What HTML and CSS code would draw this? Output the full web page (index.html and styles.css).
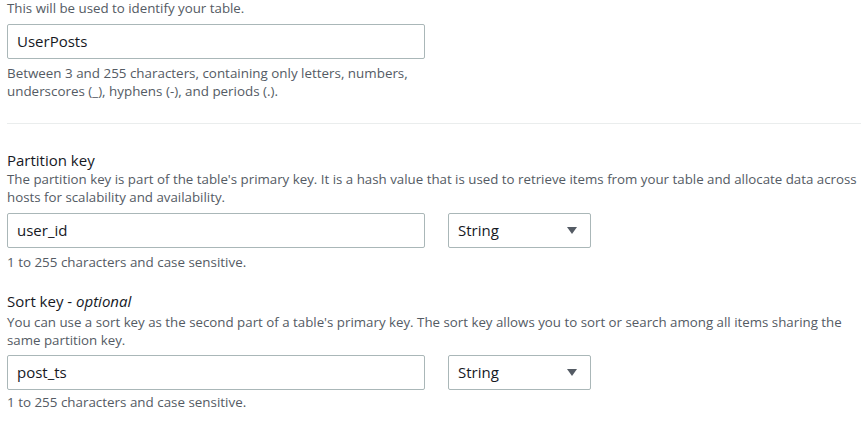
FILE: index.html
```html
<!DOCTYPE html>
<html>
<head>
<meta charset="utf-8">
<link rel="stylesheet" href="styles.css">
</head>
<body>
<div class="page">
  <section class="field first">
    <p class="desc">This will be used to identify your table.</p>
    <div class="input wide">UserPosts</div>
    <p class="hint">Between 3 and 255 characters, containing only letters, numbers,<br>underscores (_), hyphens (-), and periods (.).</p>
  </section>
  <hr class="divider">
  <section class="field second">
    <h3 class="label">Partition key</h3>
    <p class="desc">The partition key is part of the table's primary key. It is a hash value that is used to retrieve items from your table and allocate data across hosts for scalability and availability.</p>
    <div class="row">
      <div class="input wide">user_id</div>
      <div class="select">String<span class="caret"></span></div>
    </div>
    <p class="hint">1 to 255 characters and case sensitive.</p>
  </section>
  <section class="field third">
    <h3 class="label">Sort key - <em>optional</em></h3>
    <p class="desc">You can use a sort key as the second part of a table's primary key. The sort key allows you to sort or search among all items sharing the same partition key.</p>
    <div class="row">
      <div class="input wide">post_ts</div>
      <div class="select">String<span class="caret"></span></div>
    </div>
    <p class="hint">1 to 255 characters and case sensitive.</p>
  </section>
</div>
</body>
</html>
```
FILE: styles.css
```css
* { box-sizing: border-box; }
html, body { margin: 0; padding: 0; background: #fff; }
body {
  font-family: "Open Sans", "Liberation Sans", sans-serif;
  color: #16191f;
}
.page { padding: 0 0 0 7px; width: 861px; overflow: hidden; }
p, h3 { margin: 0; }
.desc {
  font-size: 13.3px;
  line-height: 17.5px;
  color: #545b64;
  width: 850px;
}
.first .desc { line-height: 17px; }
.hint {
  font-size: 13.4px;
  line-height: 18px;
  color: #545b64;
  margin-top: 5px;
}
.input {
  height: 35px;
  border: 1px solid #aab7b8;
  border-radius: 2px;
  font-size: 15px;
  line-height: 33px;
  padding-left: 9px;
  color: #16191f;
  font-weight: 500;
}
.wide { width: 418px; }
.first .input { margin-top: 7px; }
.divider {
  border: 0;
  border-top: 1px solid #eaeded;
  margin: 23px 0 0 0;
  height: 0;
}
.label {
  font-size: 15px;
  line-height: 20px;
  font-weight: 400;
  color: #16191f;
}
.label em { font-style: italic; }
.second { margin-top: 26px; }
.second .desc { margin-top: 1px; }
.second .row { margin-top: 7px; }
.third { margin-top: 20px; }
.third .desc { margin-top: 3px; }
.third .row { margin-top: 6px; }
.third .hint { margin-top: 3px; }
.row {
  display: flex;
  gap: 23px;
}
.select {
  width: 143px;
  height: 35px;
  border: 1px solid #aab7b8;
  border-radius: 2px;
  font-size: 15px;
  line-height: 33px;
  padding-left: 9px;
  font-weight: 500;
  color: #16191f;
  position: relative;
}
.caret {
  position: absolute;
  right: 13px;
  top: 13px;
  width: 0; height: 0;
  border-left: 5px solid transparent;
  border-right: 5px solid transparent;
  border-top: 7px solid #545b64;
}
```
